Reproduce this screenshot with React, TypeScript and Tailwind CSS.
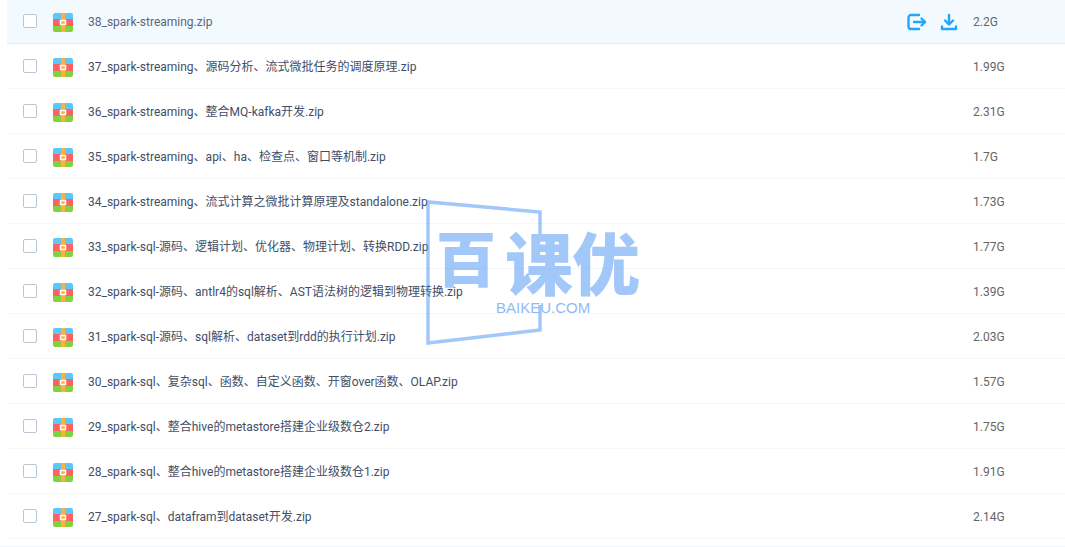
import React from 'react';

interface FileItem {
  name: string;
  size: string;
}

const files: FileItem[] = [
  { name: '38_spark-streaming.zip', size: '2.2G' },
  { name: '37_spark-streaming、源码分析、流式微批任务的调度原理.zip', size: '1.99G' },
  { name: '36_spark-streaming、整合MQ-kafka开发.zip', size: '2.31G' },
  { name: '35_spark-streaming、api、ha、检查点、窗口等机制.zip', size: '1.7G' },
  { name: '34_spark-streaming、流式计算之微批计算原理及standalone.zip', size: '1.73G' },
  { name: '33_spark-sql-源码、逻辑计划、优化器、物理计划、转换RDD.zip', size: '1.77G' },
  { name: '32_spark-sql-源码、antlr4的sql解析、AST语法树的逻辑到物理转换.zip', size: '1.39G' },
  { name: '31_spark-sql-源码、sql解析、dataset到rdd的执行计划.zip', size: '2.03G' },
  { name: '30_spark-sql、复杂sql、函数、自定义函数、开窗over函数、OLAP.zip', size: '1.57G' },
  { name: '29_spark-sql、整合hive的metastore搭建企业级数仓2.zip', size: '1.75G' },
  { name: '28_spark-sql、整合hive的metastore搭建企业级数仓1.zip', size: '1.91G' },
  { name: '27_spark-sql、datafram到dataset开发.zip', size: '2.14G' },
];

function ZipIcon() {
  return (
    <svg width="20" height="19" viewBox="0 0 20 19" className="shrink-0 mt-[2px]">
      <defs>
        <clipPath id="zip-clip">
          <rect width="20" height="19" rx="2" />
        </clipPath>
      </defs>
      <g clipPath="url(#zip-clip)">
        <rect width="20" height="6" fill="#5ac8fa" />
        <rect y="6" width="20" height="7" fill="#fb6260" />
        <rect y="13" width="20" height="6" fill="#84d13f" />
        <rect x="8" width="4" height="19" fill="#fdb03c" />
        <rect x="7.5" y="7.5" width="5" height="4" fill="#fdb03c" stroke="#fff" strokeWidth="1.5" />
      </g>
    </svg>
  );
}

function MoveIcon() {
  return (
    <svg width="20" height="18" viewBox="0 0 20 18" fill="none" stroke="#1ea7fd" strokeWidth="2.4" strokeLinecap="round" strokeLinejoin="round">
      <path d="M12 2H4a2.500 2.500 0 0 0-2.500 2.500v9A2.500 2.500 0 0 0 4 16h8" />
      <path d="M7 9h11" />
      <path d="M14.500 5.500 18 9l-3.500 3.500" />
    </svg>
  );
}

function DownloadIcon() {
  return (
    <svg width="18" height="18" viewBox="0 0 18 18" fill="none" stroke="#1ea7fd" strokeWidth="2.4" strokeLinecap="round" strokeLinejoin="round">
      <path d="M9 2v9" />
      <path d="M5 7.500 9 11.500l4-4" />
      <path d="M2 13.500V16h14v-2.500" />
    </svg>
  );
}

function FileRow({ file, active }: { file: FileItem; active: boolean }) {
  return (
    <div className={`flex items-center h-[45px] border-b ${active ? 'bg-[#f3faff] border-[#ddeef8]' : 'bg-white border-[#f3f6fa]'}`}>
      <div className="w-[14px] h-[14px] ml-[16px] shrink-0 rounded-[2px] border-[1.5px] border-[#b9c6d6] bg-white" />
      <div className="ml-[16px] flex shrink-0">
        <ZipIcon />
      </div>
      <span className={`ml-[15px] pt-[2px] flex-1 text-[12px] whitespace-nowrap ${active ? 'text-[#5b6679]' : 'text-[#424e67]'}`}>{file.name}</span>
      {active && (
        <div className="flex items-center gap-[13px] mr-[15px] pt-[2px]">
          <MoveIcon />
          <DownloadIcon />
        </div>
      )}
      <span className="w-[92px] pt-[2px] shrink-0 text-[12px] text-[#666]">{file.size}</span>
    </div>
  );
}

function Watermark() {
  return (
    <div className="absolute left-[425px] top-[200px] w-[220px] h-[146px] pointer-events-none opacity-50">
      <svg width="120" height="146" viewBox="0 0 120 146" fill="none" stroke="#4892f7" strokeWidth="3.500" className="absolute left-0 top-0">
        <path d="M115 36V12L3 2V143L115 130V105" />
      </svg>
      <div className="absolute left-[11px] top-[24px] flex items-center font-black text-[#4892f7] whitespace-nowrap">
        <span className="text-[60px] leading-[76px] mb-[9px]">百</span>
        <span className="ml-[9px] text-[68px] leading-[76px] -tracking-[1px]">课优</span>
      </div>
      <div className="absolute left-[71px] top-[99px] text-[15px] leading-[18px] font-['Liberation_Sans',sans-serif] text-[#2176f0] whitespace-nowrap">
        BAIKEU.COM
      </div>
    </div>
  );
}

export default function App() {
  return (
    <div className="relative w-[1065px] h-[547px] overflow-hidden bg-white font-['Roboto','Noto_Sans_CJK_SC',sans-serif]">
      <div className="ml-[7px] -mt-[1px] flex flex-col">
        {files.map((file, i) => (
          <FileRow key={file.name} file={file} active={i === 0} />
        ))}
      </div>
      <div className="mt-[7px] border-t border-[#f3f6fa]" />
      <Watermark />
    </div>
  );
}
